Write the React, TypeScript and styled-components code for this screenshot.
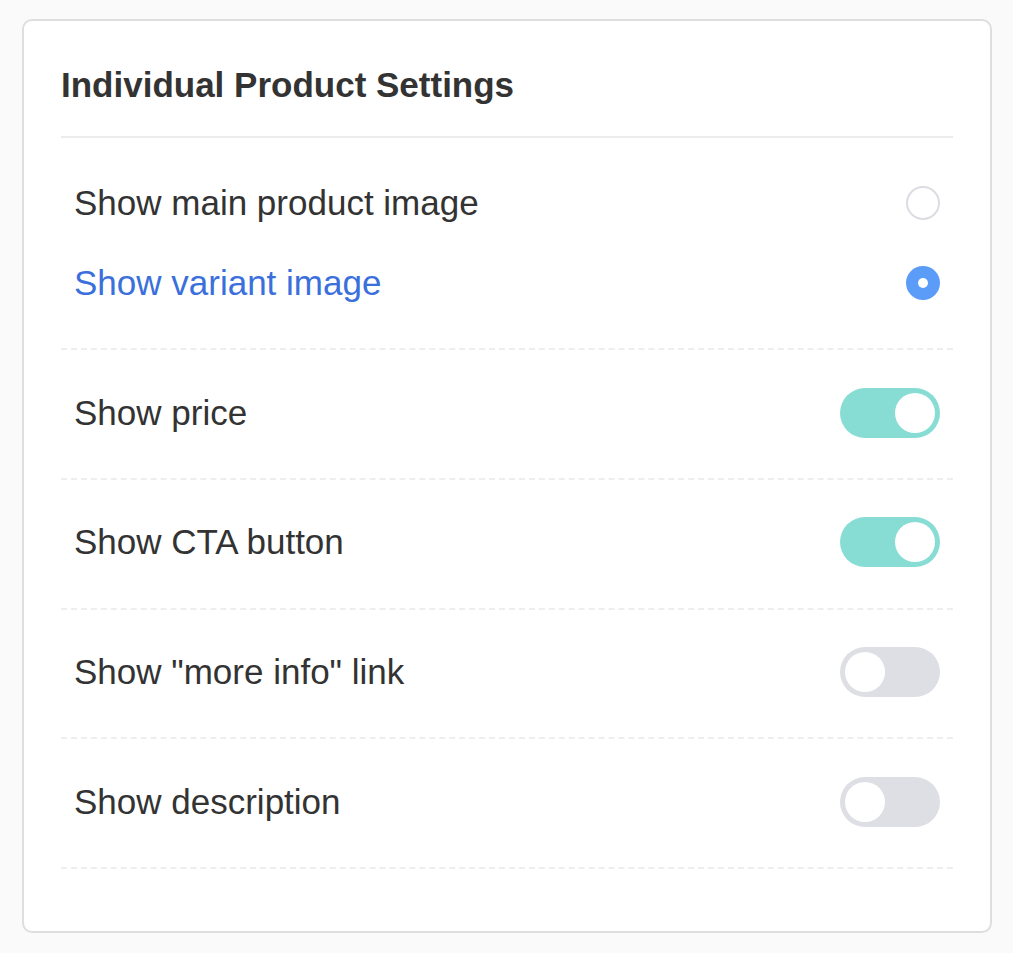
import React, { useState } from "react";
import styled, { createGlobalStyle } from "styled-components";

const Global = createGlobalStyle`
  html, body { margin: 0; padding: 0; background: #fafafa; }
  body { font-family: "Liberation Sans", Arial, sans-serif; color: #333; }
`;

const Page = styled.div`
  padding: 19px 21px 21px 22px;
`;

const Card = styled.section`
  background: #fff;
  border: 2px solid #dedede;
  border-radius: 10px;
  padding: 40px 37px 62px 37px;
`;

const Title = styled.h2`
  margin: 0;
  font-size: 35px;
  font-weight: 700;
  color: #333;
  line-height: 48px;
  padding-bottom: 27px;
  border-bottom: 2px solid #ececec;
`;

const Group = styled.div`
  padding: 25px 0 25px;
  border-bottom: 2px dashed #eeeeee;
`;

const RadioRow = styled.label<{ $active: boolean }>`
  display: flex;
  align-items: center;
  justify-content: space-between;
  height: 80px;
  padding: 0 13px;
  font-size: 35px;
  color: ${(p) => (p.$active ? "#3b6fdb" : "#333")};
  cursor: pointer;
`;

const Radio = styled.span<{ $checked: boolean }>`
  width: 34px;
  height: 34px;
  box-sizing: border-box;
  border-radius: 50%;
  border: ${(p) => (p.$checked ? "none" : "2px solid #dcdde3")};
  background: ${(p) => (p.$checked ? "#5b9cf8" : "#fff")};
  display: flex;
  align-items: center;
  justify-content: center;
  &::after {
    content: "";
    width: 10px;
    height: 10px;
    border-radius: 50%;
    background: #fff;
    display: ${(p) => (p.$checked ? "block" : "none")};
  }
`;

const ToggleRow = styled.label`
  display: flex;
  align-items: center;
  justify-content: space-between;
  padding: 37.5px 13px 40.25px;
  font-size: 35px;
  color: #333;
  border-bottom: 2px dashed #eeeeee;
  cursor: pointer;
`;

const Switch = styled.span<{ $on: boolean }>`
  width: 100px;
  height: 50px;
  border-radius: 25px;
  box-sizing: border-box;
  padding: 5px;
  background: ${(p) => (p.$on ? "#87dcd4" : "#dedfe5")};
  display: flex;
  justify-content: ${(p) => (p.$on ? "flex-end" : "flex-start")};
  &::after {
    content: "";
    width: 40px;
    height: 40px;
    border-radius: 50%;
    background: #fff;
  }
`;

export default function App() {
  const [img, setImg] = useState("variant");
  const [toggles, setToggles] = useState([
    { label: "Show price", on: true },
    { label: "Show CTA button", on: true },
    { label: 'Show "more info" link', on: false },
    { label: "Show description", on: false },
  ]);
  return (
    <>
      <Global />
      <Page>
        <Card>
          <Title>Individual Product Settings</Title>
          <Group>
            <RadioRow $active={img === "main"} onClick={() => setImg("main")}>
              <span>Show main product image</span>
              <Radio $checked={img === "main"} />
            </RadioRow>
            <RadioRow $active={img === "variant"} onClick={() => setImg("variant")}>
              <span>Show variant image</span>
              <Radio $checked={img === "variant"} />
            </RadioRow>
          </Group>
          {toggles.map((t, i) => (
            <ToggleRow
              key={t.label}
              onClick={() =>
                setToggles((ts) => ts.map((x, j) => (j === i ? { ...x, on: !x.on } : x)))
              }
            >
              <span>{t.label}</span>
              <Switch $on={t.on} />
            </ToggleRow>
          ))}
        </Card>
      </Page>
    </>
  );
}
